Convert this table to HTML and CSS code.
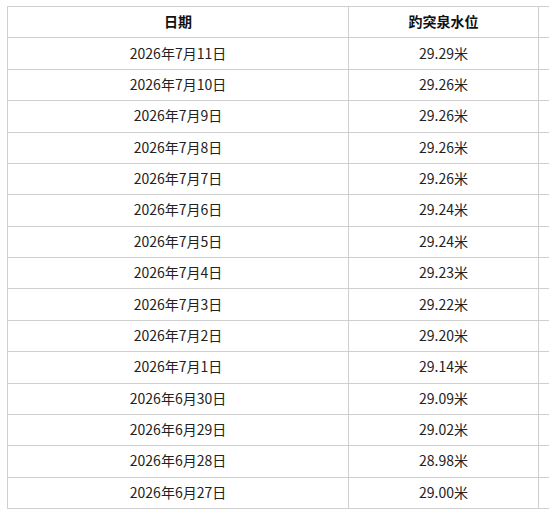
FILE: index.html
```html
<!DOCTYPE html>
<html lang="zh">
<head>
<meta charset="utf-8">
<link rel="stylesheet" href="styles.css">
</head>
<body>
<div class="wrap">
<div class="clip">
<table class="data">
<colgroup><col class="c1"><col class="c2"><col class="c3"></colgroup>
<thead>
<tr><th>日期</th><th>趵突泉水位</th><th></th></tr>
</thead>
<tbody>
<tr><td>2026年7月11日</td><td>29.29米</td><td></td></tr>
<tr><td>2026年7月10日</td><td>29.26米</td><td></td></tr>
<tr><td>2026年7月9日</td><td>29.26米</td><td></td></tr>
<tr><td>2026年7月8日</td><td>29.26米</td><td></td></tr>
<tr><td>2026年7月7日</td><td>29.26米</td><td></td></tr>
<tr><td>2026年7月6日</td><td>29.24米</td><td></td></tr>
<tr><td>2026年7月5日</td><td>29.24米</td><td></td></tr>
<tr><td>2026年7月4日</td><td>29.23米</td><td></td></tr>
<tr><td>2026年7月3日</td><td>29.22米</td><td></td></tr>
<tr><td>2026年7月2日</td><td>29.20米</td><td></td></tr>
<tr><td>2026年7月1日</td><td>29.14米</td><td></td></tr>
<tr><td>2026年6月30日</td><td>29.09米</td><td></td></tr>
<tr><td>2026年6月29日</td><td>29.02米</td><td></td></tr>
<tr><td>2026年6月28日</td><td>28.98米</td><td></td></tr>
<tr><td>2026年6月27日</td><td>29.00米</td><td></td></tr>
</tbody>
</table>
</div>
</div>
</body>
</html>
```
FILE: styles.css
```css
html, body {
  margin: 0;
  padding: 0;
  background: #fff;
  overflow: hidden;
}
.wrap {
  padding: 6px 0 0 7px;
}
.clip {
  width: 542px;
  overflow: hidden;
}
.data {
  border-collapse: collapse;
  table-layout: fixed;
  width: 632px;
  font-family: "Noto Sans CJK SC", "Microsoft YaHei", sans-serif;
  font-size: 14px;
  color: #222;
}
.c1 { width: 341px; }
.c2 { width: 190px; }
.c3 { width: 101px; }
.data th, .data td {
  border: 1px solid #cfcfcf;
  text-align: center;
  padding: 0 0 2px;
  height: 28.375px;
  line-height: 20px;
}
.data th {
  font-weight: bold;
  color: #111;
}
```
